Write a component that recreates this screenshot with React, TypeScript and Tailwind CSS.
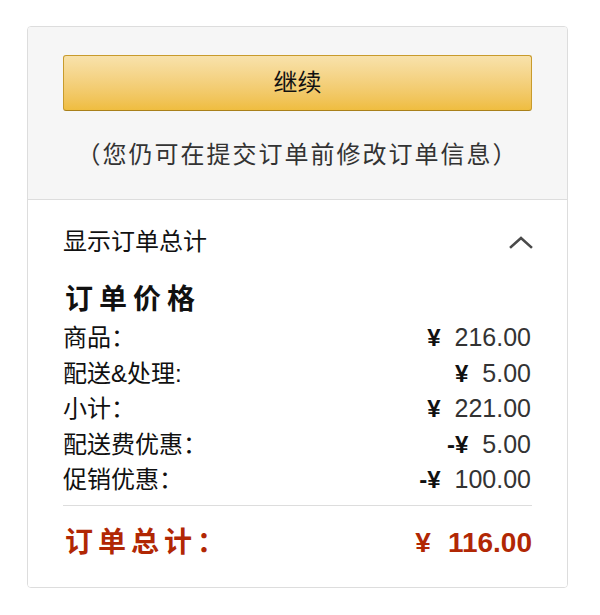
import React from "react";

const cjk = { fontFamily: '"Liberation Sans", "Noto Sans CJK SC", sans-serif' };

type Row = { label: string; neg?: boolean; value: string };

const rows: Row[] = [
  { label: "商品：", value: "216.00" },
  { label: "配送&处理:", value: "5.00" },
  { label: "小计：", value: "221.00" },
  { label: "配送费优惠：", neg: true, value: "5.00" },
  { label: "促销优惠：", neg: true, value: "100.00" },
];

function ChevronUp() {
  return (
    <svg width="26" height="16" viewBox="0 0 26 16" fill="none">
      <path d="M3 13 L13 4 L23 13" stroke="#4a4a4a" strokeWidth="2.6" strokeLinecap="square" />
    </svg>
  );
}

export default function App() {
  return (
    <div className="w-[600px] h-[615px] bg-white pt-[26px] pl-[27px]" style={cjk}>
      <div className="w-[541px] border border-[#dddddd] rounded-[4px] overflow-hidden">
        {/* checkout action */}
        <div className="bg-[#f6f6f6] border-b border-[#dddddd] px-[35px] pt-[28px] pb-[28px]">
          <button className="w-full h-[56px] rounded-[3px] border border-[#c89b2c] border-b-[#a9801a] bg-gradient-to-b from-[#f8e2ab] to-[#efbd3f] text-[24px] text-[#111] flex items-center justify-center">
            继续
          </button>
          <p className="mt-[28px] text-center text-[24px] leading-[32px] text-[#333] tracking-[2px]">
            （您仍可在提交订单前修改订单信息）
          </p>
        </div>

        {/* order summary */}
        <div className="bg-white px-[35px] pt-[26px] pb-[26px]">
          <div className="flex items-center justify-between h-[32px]">
            <span className="text-[24px] text-[#111]">显示订单总计</span>
            <span className="mr-[-2px]">
              <ChevronUp />
            </span>
          </div>

          <h2 className="mt-[24px] ml-[2px] h-[36px] leading-[36px] text-[28px] font-bold text-[#111] tracking-[6px]">
            订单价格
          </h2>

          <div className="mt-[2px]">
            {rows.map((r) => (
              <div key={r.label} className="flex justify-between h-[35.5px] leading-[35.5px] text-[24px]">
                <span className="text-[#111]">{r.label}</span>
                <span className="flex text-[#333]">
                  <span className="text-[#111] font-bold">
                    {r.neg ? "-" : ""}¥
                  </span>
                  <span className="ml-[14px] text-[25px] mr-[1px]">{r.value}</span>
                </span>
              </div>
            ))}
          </div>

          <div className="mt-[7px] border-t border-[#dddddd]" />

          <div className="mt-[19px] flex justify-between h-[36px] leading-[36px] text-[28px] font-bold text-[#b12704]">
            <span className="ml-[2px] tracking-[5px]">订单总计：</span>
            <span className="flex">
              <span>¥</span>
              <span className="ml-[17px]">116.00</span>
            </span>
          </div>
        </div>
      </div>
    </div>
  );
}
